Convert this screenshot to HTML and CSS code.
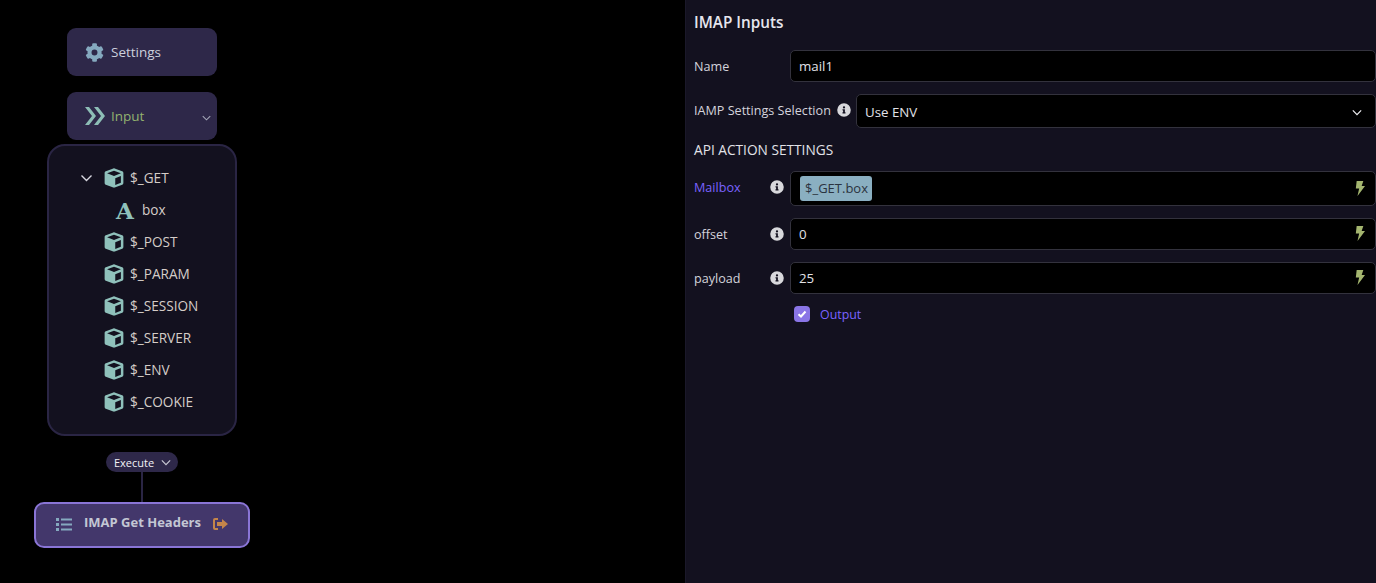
FILE: index.html
```html
<!DOCTYPE html>
<html lang="en">
<head>
<meta charset="utf-8">
<title>IMAP Inputs</title>
<link rel="stylesheet" href="styles.css">
</head>
<body>
<svg width="0" height="0" class="defs">
  <symbol id="cube" viewBox="0 0 512 512"><path d="M239 10 47 82C26 90 16 107 16 128v256c0 20 12 38 30 46l192 72c12 5 24 5 36 0l192-72c18-8 30-26 30-46V128c0-21-10-38-31-46L273 10c-11-4-23-4-34 0zM256 68l176 64v2l-176 70L80 134v-2zM288 262l144-58v176l-144 54z"/></symbol>
  <symbol id="info" viewBox="0 0 512 512"><path d="M256 8a248 248 0 1 0 0 496 248 248 0 0 0 0-496zm0 110a42 42 0 1 1 0 84 42 42 0 0 1 0-84zm56 254c0 7-5 12-12 12h-88c-7 0-12-5-12-12v-24c0-7 5-12 12-12h12v-64h-12c-7 0-12-5-12-12v-24c0-7 5-12 12-12h64c7 0 12 5 12 12v100h12c7 0 12 5 12 12z"/></symbol>
  <symbol id="bolt" viewBox="0 0 12 18"><path d="M2 0h8L8 6h4L3 18l2-9H1z"/></symbol>
  <symbol id="chev" viewBox="0 0 12 8"><path d="M1 1.5 6 6.5 11 1.5" fill="none" stroke="currentColor" stroke-width="1.4"/></symbol>
</svg>
<main class="app">
  <section class="canvas">
    <div class="node node-settings">
      <svg class="nico" viewBox="0 0 512 512"><path d="M487 316l-42-25c4-23 4-47 0-70l42-25c5-3 7-9 5-14-11-35-30-67-54-93-4-4-10-5-15-2l-42 24c-18-15-38-27-60-35V28c0-6-4-11-9-12-37-8-74-8-109 0-5 1-9 6-9 12v48c-22 8-42 20-60 35L92 87c-5-3-11-2-15 2-24 26-43 58-54 93-2 5 0 11 5 14l42 25c-4 23-4 47 0 70l-42 25c-5 3-7 9-5 14 11 35 30 67 54 93 4 4 10 5 15 2l42-24c18 15 38 27 60 35v48c0 6 4 11 9 12 37 8 74 8 109 0 5-1 9-6 9-12v-48c22-8 42-20 60-35l42 24c5 3 11 2 15-2 24-26 43-58 54-93 2-5 0-11-5-14zM256 336a80 80 0 1 1 0-160 80 80 0 0 1 0 160z"/></svg>
      <span class="nlabel">Settings</span>
    </div>
    <div class="node node-input">
      <svg class="nico nico-input" viewBox="0 0 20 18"><path d="M0 0h4l7 9-7 9H0l7-9zM9 0h4l7 9-7 9H9l7-9z"/></svg>
      <span class="nlabel nlabel-input">Input</span>
      <svg class="nchev"><use href="#chev"/></svg>
    </div>
    <div class="tree">
      <div class="trow"><svg class="tchev"><use href="#chev"/></svg><svg class="cube"><use href="#cube"/></svg><span class="tname">$_GET</span></div>
      <div class="trow trow-child"><span class="letter">A</span><span class="tname">box</span></div>
      <div class="trow trow-leaf"><svg class="cube"><use href="#cube"/></svg><span class="tname">$_POST</span></div>
      <div class="trow trow-leaf"><svg class="cube"><use href="#cube"/></svg><span class="tname">$_PARAM</span></div>
      <div class="trow trow-leaf"><svg class="cube"><use href="#cube"/></svg><span class="tname">$_SESSION</span></div>
      <div class="trow trow-leaf"><svg class="cube"><use href="#cube"/></svg><span class="tname">$_SERVER</span></div>
      <div class="trow trow-leaf"><svg class="cube"><use href="#cube"/></svg><span class="tname">$_ENV</span></div>
      <div class="trow trow-leaf"><svg class="cube"><use href="#cube"/></svg><span class="tname">$_COOKIE</span></div>
    </div>
    <div class="exec"><span>Execute</span><svg class="exchev"><use href="#chev"/></svg></div>
    <div class="wire"></div>
    <div class="node-imap">
      <svg class="listico" viewBox="0 0 16 13"><path d="M0 0h3v3H0zM5 .5h11v2H5zM0 5h3v3H0zM5 5.5h11v2H5zM0 10h3v3H0zM5 10.5h11v2H5z"/></svg>
      <span class="imap-label">IMAP Get Headers</span>
      <svg class="exitico" viewBox="0 0 15 12"><path d="M5 0v2H2v8h3v2H2a2 2 0 0 1-2-2V2a2 2 0 0 1 2-2zM9 1l6 5-6 5V8H4V4h5z"/></svg>
    </div>
  </section>
  <aside class="panel">
    <h1 class="title">IMAP Inputs</h1>
    <div class="row row-name">
      <label class="lbl lbl-wide">Name</label>
      <div class="field field-name">mail1</div>
    </div>
    <div class="row row-sel">
      <label class="lbl lbl-sel">IAMP Settings Selection<svg class="info"><use href="#info"/></svg></label>
      <div class="field field-sel">Use ENV<svg class="selchev"><use href="#chev"/></svg></div>
    </div>
    <h2 class="sub">API ACTION SETTINGS</h2>
    <div class="row row-mail">
      <label class="lbl lbl-wide lbl-purple">Mailbox<svg class="info info-right"><use href="#info"/></svg></label>
      <div class="field field-mail"><span class="tag">$_GET.box</span><svg class="bolt"><use href="#bolt"/></svg></div>
    </div>
    <div class="row row-num">
      <label class="lbl lbl-wide">offset<svg class="info info-right"><use href="#info"/></svg></label>
      <div class="field field-num">0<svg class="bolt"><use href="#bolt"/></svg></div>
    </div>
    <div class="row row-num">
      <label class="lbl lbl-wide">payload<svg class="info info-right"><use href="#info"/></svg></label>
      <div class="field field-num">25<svg class="bolt"><use href="#bolt"/></svg></div>
    </div>
    <div class="check-row">
      <span class="check"><svg viewBox="0 0 16 16"><path d="M4.5 8.2 7 10.5l4.5-5" fill="none" stroke="#fff" stroke-width="2"/></svg></span>
      <span class="check-label">Output</span>
    </div>
  </aside>
</main>
</body>
</html>
```
FILE: styles.css
```css
* { box-sizing: border-box; }
html, body { margin: 0; height: 100%; background: #000; }
body { font-family: "Open Sans", "Noto Sans", sans-serif; font-size: 13px; color: #d6d3df; overflow: hidden; }
.defs { position: absolute; }
.app { display: flex; height: 583px; width: 1376px; }

.canvas { position: relative; width: 685px; background: #000; flex: none; }
.node { position: absolute; left: 67px; width: 150px; height: 48px; background: #2e2849; border-radius: 9px; display: flex; align-items: center; padding-left: 18px; }
.node-settings { top: 28px; }
.node-input { top: 92px; }
.nico { width: 19px; height: 19px; fill: #85a9bf; flex: none; }
.nico-input { width: 20px; height: 18px; fill: #8dbdb6; }
.nlabel { margin-left: 7px; font-size: 13.5px; color: #ccd0dd; }
.nlabel-input { margin-left: 6px; color: #93b36f; }
.nchev { position: absolute; right: 6px; top: 23px; width: 9px; height: 6px; color: #a5a8b8; }
.tree { position: absolute; left: 47px; top: 144px; width: 190px; height: 292px; background: #13111f; border: 2px solid #2a2544; border-radius: 18px; padding-top: 16px; }
.trow { display: flex; align-items: center; height: 32px; padding-left: 55px; font-size: 13.6px; color: #d5cdc8; }
.tname { margin-bottom: 2px; }
.trow .cube { width: 20px; height: 20px; fill: #8fc1bb; margin-right: 6px; flex: none; }
.trow:first-child { padding-left: 31px; }
.tchev { width: 13px; height: 8px; color: #d8d8e0; margin-right: 11px; flex: none; }
.trow-child { padding-left: 67px; }
.letter { width: 17px; margin-right: 9px; font-family: "DejaVu Serif", serif; font-weight: 700; font-size: 23px; color: #8fc1bb; line-height: 1; text-align: center; }
.exec { position: absolute; left: 106px; top: 452px; width: 72px; height: 20px; border-radius: 10px; background: #2e2849; color: #f2f2f6; font-size: 11px; display: flex; align-items: center; padding-left: 8px; gap: 7px; }
.exchev { width: 10px; height: 7px; color: #c9c9d4; }
.wire { position: absolute; left: 141px; top: 472px; width: 2px; height: 30px; background: #2a2544; }
.node-imap { position: absolute; left: 34px; top: 502px; width: 216px; height: 46px; background: #43376b; border: 2px solid #8a75d6; border-radius: 10px; }
.listico { position: absolute; left: 20px; top: 14px; width: 16px; height: 13px; fill: #85a9bf; }
.imap-label { position: absolute; left: 48px; top: 9px; font-size: 13px; font-weight: 700; color: #c3c7d4; white-space: nowrap; }
.exitico { position: absolute; left: 177px; top: 14px; width: 15px; height: 12px; fill: #c4854a; }

.panel { flex: 1; background: #13111f; padding: 12px 0 0 8px; border-left: 1px solid #1a1829; }
.title { margin: 0 0 18px; font-size: 15.3px; line-height: 20px; font-weight: 600; color: #e6e6ee; }
.row { display: flex; align-items: center; margin-bottom: 12px; }
.lbl { display: flex; align-items: center; font-size: 12.6px; color: #d3d3dc; white-space: nowrap; }
.lbl-wide { width: 96px; flex: none; position: relative; }
.lbl-sel { width: 162px; flex: none; padding-bottom: 2px; }
.lbl-purple { color: #7a63ff; padding-bottom: 3px; }
.info { width: 14px; height: 14px; fill: #d8d8dc; margin-left: 6px; flex: none; }
.info-right { position: absolute; left: 76px; margin: 0; }
.field { position: relative; flex: 1; display: flex; align-items: center; background: #000; border: 1px solid #33323d; border-radius: 5px; padding-left: 8px; font-size: 13.3px; color: #e2e2e8; }
.field-name { height: 32px; }
.field-sel { height: 34px; padding-top: 2px; }
.field-mail { height: 35px; }
.field-num { height: 32px; }
.selchev { position: absolute; right: 13px; top: 14px; width: 10px; height: 7px; color: #f0f0f4; }
.bolt { position: absolute; right: 10px; top: 50%; margin-top: -8px; width: 10px; height: 15px; fill: #a4b56f; }
.tag { margin-left: 1px; background: #8aafc1; color: #2a3340; border-radius: 3px; padding: 0 4px 0 5px; line-height: 25px; height: 25px; font-size: 13px; }
.sub { margin: 0 0 11px; font-size: 13.7px; line-height: 20px; font-weight: 500; color: #e2e2e8; }
.check-row { display: flex; align-items: center; margin-left: 100px; margin-top: -2px; }
.check { width: 16px; height: 16px; border-radius: 4px; background: #8a75e6; display: block; }
.check svg { width: 16px; height: 16px; display: block; }
.check-label { margin-left: 10px; font-size: 12.4px; color: #7a63ff; padding-top: 2px; }
```
